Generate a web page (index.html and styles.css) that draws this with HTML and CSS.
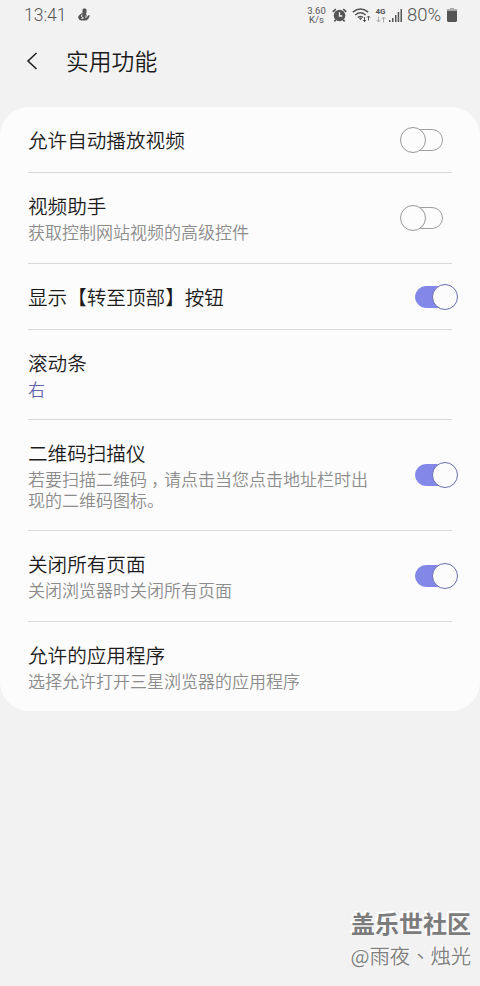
FILE: index.html
```html
<!DOCTYPE html>
<html lang="zh-CN">
<head>
    <meta charset="UTF-8">
    <meta name="viewport" content="width=device-width, initial-scale=1.0">
    <title>实用功能</title>
    <link rel="stylesheet" href="styles.css">
</head>
<body>
    <div class="status-bar">
        <span class="time">13:41</span>
        <svg class="app-icon" width="14" height="14" viewBox="0 0 14 14">
            <path fill="#555" d="M5.500 1.500 6.500.5h2l1 1v3l-.8 1.300 1.300 1.200-.5 1 1.200.5 1-1.500h.8v1.500l-1.300 2.500-1.800 1.500H4.500L2.500 12 1 9.500l.5-1.500L3.500 6 5.500 5z"/>
            <path fill="none" stroke="#f2f2f2" stroke-width="1" d="M5 6.500 4.500 8.500l2 1.500-2 .5M9 7.500v2.500"/>
        </svg>
        <div class="status-right">
            <div class="speed"><span>3.60</span><span>K/s</span></div>
            <svg class="alarm" width="15" height="15" viewBox="0 0 16 16">
                <circle cx="8" cy="8" r="6.200" fill="#555"/>
                <path fill="none" stroke="#555" stroke-width="1.800" d="M.8 4.200 4 1.200M12 1.200 15.200 4.200M4 12.500l-1.500 2M12 12.500l1.500 2"/>
                <path fill="none" stroke="#f2f2f2" stroke-width="1.400" d="M8 4.500v4h3"/>
            </svg>
            <svg class="wifi" width="19" height="16" viewBox="0 0 19 16">
                <path fill="none" stroke="#555" stroke-width="1.500" d="M.8 5.200Q8.500-1.200 16.200 5.200M3.300 8Q8.500 3.600 13.700 8M5.800 10.500Q8.500 8.500 11 10.500"/>
                <path fill="#555" d="m8.500 10.600 1.500 1-1.500 1.600-1.500-1.600z"/>
                <path fill="none" stroke="#555" d="M12.500 10v4.500M11 13l1.500 1.700 1.500-1.700M16.500 13.500V9M15 10.500 16.500 9l1.500 1.500"/>
            </svg>
            <div class="network">
                <span>4G</span>
                <svg width="10" height="7" viewBox="0 0 10 7">
                    <path fill="none" stroke="#aaa" d="M2.500.5v5.500M.5 4l2 2 2-2M7.500 6.500V1M5.500 3l2-2 2 2"/>
                </svg>
            </div>
            <svg class="signal" width="13" height="13" viewBox="0 0 13 13">
                <path fill="#555" d="M0 11h1.500v2H0zM3 9h1.500v4H3zM6 6h1.500v7H6zM8.700 3h1.500v10H8.700zM11.500 0H13v13h-1.500z"/>
            </svg>
            <span class="percent">80%</span>
            <svg class="battery" width="10" height="14" viewBox="0 0 10 14">
                <path fill="#aaa" d="M3 0h4v1h3v2H0V1h3z"/>
                <path fill="#555" d="M0 3h10v10l-1 1H1l-1-1z"/>
            </svg>
        </div>
    </div>

    <div class="header">
        <svg class="back" width="12" height="18" viewBox="0 0 12 18">
            <path fill="none" stroke="#222" stroke-width="1.600" d="M10.500 1 2 9l8.500 8"/>
        </svg>
        <h1>实用功能</h1>
    </div>

    <div class="card">
        <div class="row single">
            <div class="text"><h3>允许自动播放视频</h3></div>
            <div class="toggle"></div>
        </div>
        <div class="row">
            <div class="text">
                <h3>视频助手</h3>
                <p>获取控制网站视频的高级控件</p>
            </div>
            <div class="toggle"></div>
        </div>
        <div class="row single">
            <div class="text"><h3>显示【转至顶部】按钮</h3></div>
            <div class="toggle on"></div>
        </div>
        <div class="row short">
            <div class="text">
                <h3>滚动条</h3>
                <p class="value">右</p>
            </div>
        </div>
        <div class="row tall">
            <div class="text">
                <h3>二维码扫描仪</h3>
                <p>若要扫描二维码<span class="comma">，</span>请点击当您点击地址栏时出现的二维码图标。</p>
            </div>
            <div class="toggle on"></div>
        </div>
        <div class="row">
            <div class="text">
                <h3>关闭所有页面</h3>
                <p>关闭浏览器时关闭所有页面</p>
            </div>
            <div class="toggle on"></div>
        </div>
        <div class="row short">
            <div class="text">
                <h3>允许的应用程序</h3>
                <p>选择允许打开三星浏览器的应用程序</p>
            </div>
        </div>
    </div>

    <div class="watermark">
        <div class="site">盖乐世社区</div>
        <div class="user">@雨夜<span lang="zh-TW">、</span>烛光</div>
    </div>
</body>
</html>
```
FILE: styles.css
```css
* {
    box-sizing: border-box;
}
body {
    margin: 0;
    height: 986px;
    display: flex;
    flex-direction: column;
    background: #f2f2f2;
    color: #1c1c1c;
    font-family: "Noto Sans CJK SC", sans-serif;
    font-weight: 350;
    overflow: hidden;
}
h1, h3, p {
    margin: 0;
    font-weight: 350;
}
.status-bar {
    display: flex;
    align-items: center;
    height: 30px;
    padding: 0 23px 0 24px;
    color: #555;
    font-family: Roboto, sans-serif;
}
.time {
    width: 53px;
    font-size: 17.5px;
    line-height: 30px;
}
.status-right {
    display: flex;
    align-items: center;
    margin-left: auto;
}
.speed {
    display: flex;
    flex-direction: column;
    align-items: center;
    width: 19px;
    margin-right: 6px;
    font-size: 9.5px;
    font-weight: 400;
    line-height: 9px;
}
.wifi {
    margin-left: 5px;
}
.network {
    display: flex;
    flex-direction: column;
    align-items: center;
    width: 11px;
    margin: 0 3px 0 4px;
    font-size: 8px;
    font-weight: bold;
    line-height: 8px;
}
.percent {
    width: 36px;
    margin-left: 5px;
    font-size: 18.5px;
    line-height: 30px;
}
.battery {
    margin-left: 4px;
}
.header {
    display: flex;
    align-items: center;
    height: 77px;
    padding: 0 26px 15px;
}
.back {
    margin-right: 28px;
}
.header h1 {
    font-size: 22.8px;
    line-height: 32px;
}
.card {
    height: 604px;
    padding: 0 28px;
    background: #fcfcfc;
    border-radius: 29px;
}
.row {
    display: flex;
    align-items: center;
    height: 91px;
    border-bottom: 1px solid #d9d9d9;
}
.row.single {
    height: 66px;
}
.row.short {
    height: 90px;
}
.row.tall {
    height: 111px;
}
.row:last-child {
    height: 89px;
    border-bottom: none;
}
.text {
    width: 344px;
    padding-bottom: 3px;
}
.row.single .text {
    padding-bottom: 0;
}
.text h3 {
    font-size: 19.6px;
    line-height: 30px;
}
.text p {
    color: #8c8c8c;
    font-size: 17px;
    line-height: 21px;
}
.text .value {
    color: #6366ab;
}
.comma {
    margin: 0 -4px 0 4px;
}
.toggle {
    display: flex;
    align-items: center;
    position: relative;
    width: 43px;
    height: 26px;
    margin: 0 9px 0 auto;
}
.toggle::before {
    content: "";
    box-sizing: border-box;
    width: 36px;
    height: 22px;
    margin-left: auto;
    border: 1px solid #a0a0a0;
    border-radius: 11px;
}
/* knob sits over the track */
.toggle::after {
    content: "";
    box-sizing: border-box;
    position: absolute;
    top: 0;
    left: 0;
    width: 26px;
    height: 26px;
    background: #fcfcfc;
    border: 1px solid #999;
    border-radius: 50%;
}
.toggle.on {
    margin-right: -6px;
}
.toggle.on::before {
    margin-left: 0;
    background: #8388e8;
    border-color: #8388e8;
}
.toggle.on::after {
    left: auto;
    right: 0;
    border-color: #6a6fae;
}
.watermark {
    margin-top: auto;
    padding: 0 9px 16px 0;
    color: #808080;
    text-align: right;
}
/* embossed lettering */
.site {
    color: #7c7c7c;
    font-size: 24px;
    font-weight: bold;
    line-height: 34px;
    text-shadow: -1px -1px 0 #fff, -2px -2px 0 #fff;
}
.user {
    font-size: 20.3px;
    line-height: 30px;
    text-shadow: -1px -1px 0 #fff;
}
```
